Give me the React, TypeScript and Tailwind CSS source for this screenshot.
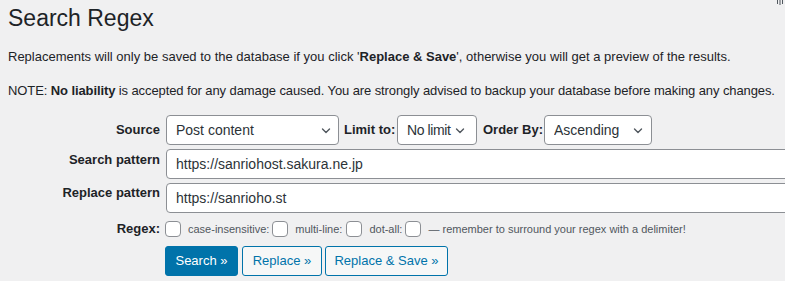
import React from "react";

function Chevron({ className }: { className: string }) {
  return (
    <svg
      className={className}
      width="10"
      height="6"
      viewBox="0 0 10 6"
      fill="none"
      stroke="#50575e"
      strokeWidth="1.4"
      strokeLinecap="round"
      strokeLinejoin="round"
    >
      <polyline points="1.5,1 5,4.5 8.5,1" />
    </svg>
  );
}

function Select({
  width,
  value,
  options,
  chevronRight,
  padRight,
}: {
  width: string;
  value: string;
  options: string[];
  chevronRight: string;
  padRight: string;
}) {
  return (
    <div className={`relative h-[30px] ${width}`}>
      <select
        defaultValue={value}
        className={`h-[30px] w-full appearance-none rounded-[4px] border border-[#8c8f94] bg-white pl-[9px] ${padRight} text-[14px] leading-[28px] text-[#2c3338] outline-none`}
      >
        {options.map((o) => (
          <option key={o}>{o}</option>
        ))}
      </select>
      <Chevron className={`pointer-events-none absolute top-[13px] ${chevronRight}`} />
    </div>
  );
}

function Checkbox() {
  return (
    <input
      type="checkbox"
      className="m-0 h-[16px] w-[16px] shrink-0 appearance-none rounded-[4px] border border-[#8c8f94] bg-white"
    />
  );
}

export default function App() {
  return (
    <div className="relative h-[281px] w-[785px] overflow-hidden bg-[#f0f0f1] font-['Liberation_Sans',Arial,sans-serif] text-[#1d2327]">
      <svg
        className="absolute left-[776px] top-0"
        width="8"
        height="6"
        viewBox="0 0 8 6"
        fill="none"
        stroke="#50575e"
        strokeWidth="1"
      >
        <path d="M1.5 0v4M4 0v5M6.5 0v4" />
      </svg>
      <div className="pl-[8px]">
        <h1 className="m-0 pt-[3px] text-[23px] font-normal leading-[30px]">Search Regex</h1>
        <p className="mt-[14px] whitespace-nowrap text-[13px] leading-[20px]">
          Replacements will only be saved to the database if you click '<strong>Replace &amp; Save</strong>', otherwise you will get a preview of the results.
        </p>
        <p className="mt-[14px] whitespace-nowrap text-[13px] leading-[20px] tracking-[-0.1px]">
          NOTE: <strong>No liability</strong> is accepted for any damage caused. You are strongly advised to backup your database before making any changes.
        </p>
        <form className="mt-[14px] flex flex-col" onSubmit={(e) => e.preventDefault()}>
          <div className="flex h-[30px] items-center">
            <label className="w-[152px] shrink-0 text-right text-[13px] font-bold leading-[20px] text-[#1d2327]">Source</label>
            <div className="ml-[6px]">
              <Select
                width="w-[173px]"
                value="Post content"
                options={["Post content", "Post title", "Post excerpt"]}
                chevronRight="right-[8px]"
                padRight="pr-[24px]"
              />
            </div>
            <label className="ml-[5px] w-[53px] shrink-0 text-[13px] font-bold leading-[20px]">Limit to:</label>
            <div className="tracking-[-0.4px]">
              <Select
                width="w-[80px]"
                value="No limit"
                options={["No limit", "10", "50"]}
                chevronRight="right-[12px]"
                padRight="pr-[2px]"
              />
            </div>
            <label className="ml-[6px] w-[61px] shrink-0 text-[13px] font-bold leading-[20px]">Order By:</label>
            <Select
              width="w-[108px]"
              value="Ascending"
              options={["Ascending", "Descending"]}
              chevronRight="right-[9px]"
              padRight="pr-[20px]"
            />
          </div>
          <div className="mt-[4px] flex h-[30px] items-start">
            <label className="w-[152px] shrink-0 pt-[1px] text-right text-[13px] font-bold leading-[20px]">Search pattern</label>
            <input
              type="text"
              defaultValue="https://sanriohost.sakura.ne.jp"
              className="ml-[6px] h-[30px] w-[640px] shrink-0 rounded-[4px] border border-[#8c8f94] bg-white px-[9px] text-[14px] text-[#2c3338] outline-none"
            />
          </div>
          <div className="mt-[4px] flex h-[30px] items-start">
            <label className="w-[152px] shrink-0 text-right text-[13px] font-bold leading-[20px]">Replace pattern</label>
            <input
              type="text"
              defaultValue="https://sanrioho.st"
              className="ml-[6px] h-[30px] w-[640px] shrink-0 rounded-[4px] border border-[#8c8f94] bg-white px-[9px] text-[14px] text-[#2c3338] outline-none"
            />
          </div>
          <div className="mt-[8px] flex h-[16px] items-center">
            <label className="w-[152px] shrink-0 text-right text-[13px] font-bold leading-[20px]">Regex:</label>
            <div className="ml-[5px] flex">
              <Checkbox />
            </div>
            <span className="ml-[7px] text-[11px] leading-[16px] text-[#50575e]">case-insensitive:</span>
            <div className="ml-[3px] flex">
              <Checkbox />
            </div>
            <span className="ml-[7px] text-[11px] leading-[16px] text-[#50575e]">multi-line:</span>
            <div className="ml-[4px] flex">
              <Checkbox />
            </div>
            <span className="ml-[7px] text-[11px] leading-[16px] text-[#50575e]">dot-all:</span>
            <div className="ml-[3px] flex">
              <Checkbox />
            </div>
            <span className="ml-[7px] text-[11px] leading-[16px] text-[#50575e]">— remember to surround your regex with a delimiter!</span>
          </div>
          <div className="mt-[9px] flex h-[30px] pl-[157px]">
            <button
              type="submit"
              className="h-[30px] w-[73px] rounded-[3px] border border-[#0073aa] bg-[#0073aa] text-center text-[13px] leading-[28px] text-white"
            >
              Search »
            </button>
            <button
              type="button"
              className="ml-[4px] h-[30px] w-[80px] rounded-[3px] border border-[#0073aa] bg-[#f6f7f7] text-center text-[13px] leading-[28px] text-[#0073aa]"
            >
              Replace »
            </button>
            <button
              type="button"
              className="ml-[3px] h-[30px] w-[123px] rounded-[3px] border border-[#0073aa] bg-[#f6f7f7] text-center text-[13px] leading-[28px] text-[#0073aa]"
            >
              Replace &amp; Save »
            </button>
          </div>
        </form>
      </div>
    </div>
  );
}
